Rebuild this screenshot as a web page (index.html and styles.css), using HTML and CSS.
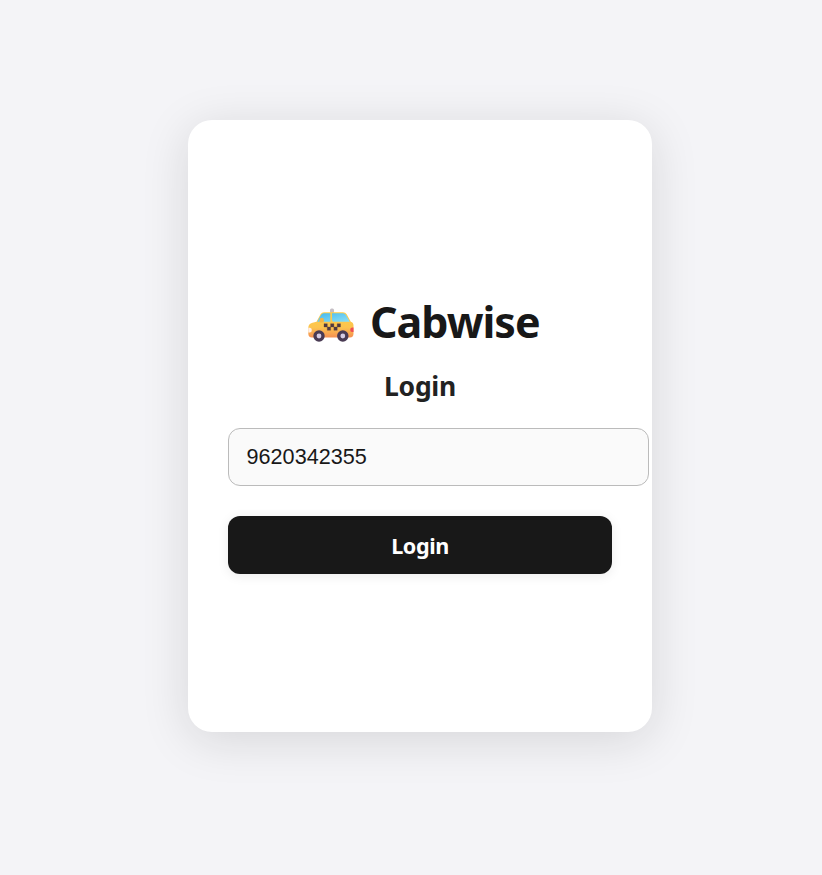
FILE: index.html
```html
<!DOCTYPE html>
<html lang="en">
<head>
<meta charset="utf-8">
<title>Cabwise</title>
<link rel="stylesheet" href="styles.css">
</head>
<body>
<main class="card">
  <h1 class="brand">
    <svg class="taxi" viewBox="0 0 48 36" aria-hidden="true">
      <defs>
        <linearGradient id="body" x1="0" y1="0" x2="0" y2="1">
          <stop offset="0" stop-color="#ffce4a"/><stop offset=".6" stop-color="#fcc44d"/><stop offset="1" stop-color="#f58f52"/>
        </linearGradient>
        <linearGradient id="glass" x1="0" y1="0" x2="1" y2="1">
          <stop offset="0" stop-color="#45b8ee"/><stop offset="1" stop-color="#8be0f5"/>
        </linearGradient>
      </defs>
      <rect x="23" y="1.500" width="4" height="5" rx="1.500" fill="#c5bec4"/>
      <path d="M17 5.200H36Q38.500 5.200 39.700 7.200L43.800 14.700Q46.500 15.500 46.500 18.500V26.500Q46.500 30.500 43 30.500H5Q1.300 30.500 1.300 26.500V21Q1.300 16.500 5.500 15.700L9.500 14.800L13.500 7.200Q14.700 5.200 17 5.200Z" fill="url(#body)"/>
      <path d="M16.800 6.200H23.300V14.700H10.200L14.200 7.700Q15.100 6.200 16.800 6.200ZM25 6.200H36Q37.800 6.200 38.800 7.700L42.800 14.700H26.500Q25 14.700 25 13Z" fill="url(#glass)"/>
      <path d="M12.500 15.200V13Q13 10.800 15 10.800Q17 10.800 17 13.500Q17 16 14 15.500Z" fill="#f4b544"/>
      <path d="M17 16.700h3.300v3.300H17zM23.600 16.700h3.300v3.300h-3.300zM30.200 16.700h3.300v3.300h-3.300zM20.300 20h3.300v3.300h-3.300zM26.900 20h3.300v3.300h-3.300z" fill="#513b42" stroke="#513b42" stroke-width=".3"/>
      <path d="M1.300 20.800H3Q4.800 21 4.800 23Q4.800 25.500 2.800 25.500H1.300Z" fill="#fff0e8"/>
      <path d="M46.500 20.500H45Q43.200 21 43.200 22.800Q43.200 25 45 25H46.500Z" fill="#f04d55"/>
      <circle cx="12" cy="29" r="5.700" fill="#493a53"/><circle cx="35.800" cy="29" r="5.700" fill="#493a53"/>
      <circle cx="12" cy="29" r="2.400" fill="#d5cbe3"/><circle cx="35.800" cy="29" r="2.400" fill="#d5cbe3"/>
    </svg>
    <span class="name">Cabwise</span>
  </h1>
  <h2 class="title">Login</h2>
  <input class="phone" type="text" value="9620342355" aria-label="Phone number">
  <button class="submit" type="button">Login</button>
</main>
</body>
</html>
```
FILE: styles.css
```css
body {
  box-sizing: border-box;
  min-height: 875px;
  margin: 0;
  padding-top: 120px;
  background: #f4f4f7;
  font-family: "Noto Sans", sans-serif;
  color: #181818;
}
.card {
  box-sizing: border-box;
  width: 464px;
  height: 612px;
  margin: 0 0 0 188px;
  padding: 172px 40px 0;
  background: #fff;
  border-radius: 24px;
  box-shadow: 0 8px 48px rgba(24, 24, 24, .13);
}
.brand {
  display: flex;
  align-items: center;
  height: 60px;
  margin: 0;
  padding-left: 79px;
  font-size: 43px;
  line-height: 60px;
}
.taxi {
  width: 48px;
  height: 36px;
  margin: 6px 15px 0 0;
}
.name { letter-spacing: -1px; }
.title {
  height: 36px;
  margin: 16px 0 0;
  text-align: center;
  font-size: 26.500px;
  letter-spacing: -.3px;
  line-height: 36px;
  color: #222;
}
.phone {
  display: block;
  box-sizing: border-box;
  width: 421px;
  height: 58px;
  margin: 24px 0 0;
  padding: 0 17.600px;
  border: 1px solid #bbb;
  border-radius: 12px;
  background: #fafafa;
  color: #181818;
  font: 21.600px "Liberation Sans", Arial, sans-serif;
}
.submit {
  display: block;
  width: 384px;
  height: 58px;
  margin: 30px 0 0;
  padding: 0;
  border: 0;
  border-radius: 12px;
  background: #181818;
  box-shadow: 0 2px 12px rgba(0, 0, 0, .08);
  color: #fff;
  font: bold 21.600px "Noto Sans", sans-serif;
  letter-spacing: -.4px;
}
```
